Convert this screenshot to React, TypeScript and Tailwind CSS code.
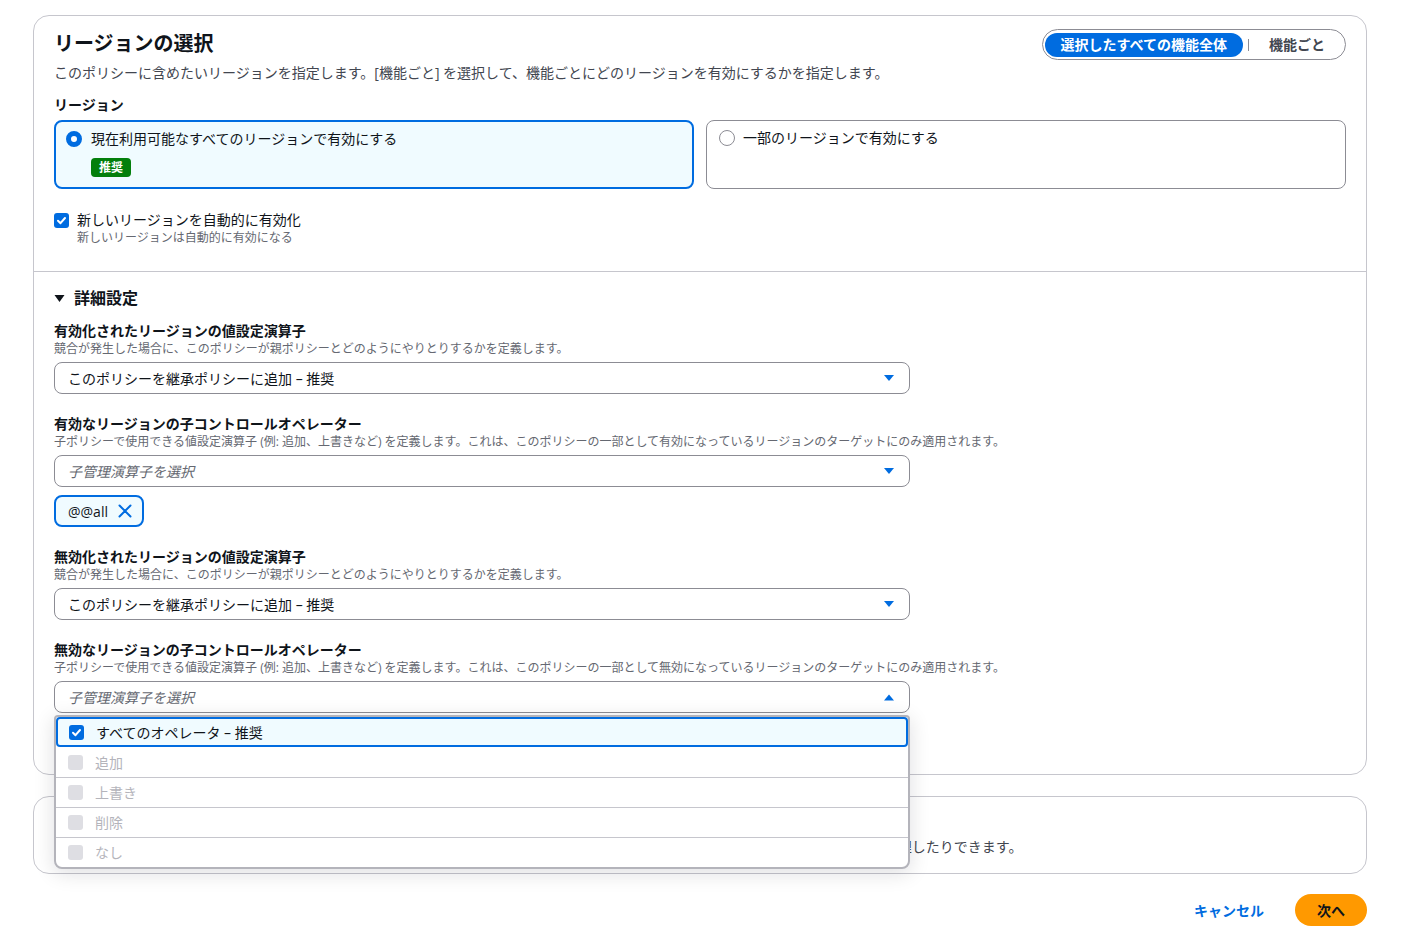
import React from "react";

const font = { fontFamily: '"Open Sans", "Noto Sans CJK JP", sans-serif' };

function Caret({ up = false }: { up?: boolean }) {
  return (
    <svg width="12" height="8" viewBox="0 0 12 8" className="shrink-0">
      {up ? <path d="M1 7.5 L6 1.5 L11 7.5 Z" fill="#006ce0" /> : <path d="M1 1 L6 7 L11 1 Z" fill="#006ce0" />}
    </svg>
  );
}

function CheckBox({ checked = false, disabled = false }: { checked?: boolean; disabled?: boolean }) {
  if (checked) {
    return (
      <span className="w-[15px] h-[15px] rounded-[3px] bg-[#006ce0] flex items-center justify-center shrink-0">
        <svg width="11" height="11" viewBox="0 0 11 11">
          <path d="M2 5.8 L4.5 8.2 L9 3" stroke="#fff" strokeWidth="2" fill="none" strokeLinecap="round" strokeLinejoin="round" />
        </svg>
      </span>
    );
  }
  return (
    <span
      className={
        disabled
          ? "w-[15px] h-[15px] rounded-[3px] bg-[#dedee3] shrink-0"
          : "w-[15px] h-[15px] rounded-[3px] border-2 border-[#8c8c94] shrink-0"
      }
    />
  );
}

function Select({ value, placeholder, up = false }: { value?: string; placeholder?: string; up?: boolean }) {
  return (
    <div className="mt-[5px] w-[856px] h-[32px] rounded-[8px] border border-[#8c8c94] bg-white flex items-center justify-between pl-[13px] pr-[14px]">
      {value ? (
        <span className="text-[14px] text-[#0f141a]">{value}</span>
      ) : (
        <span className="text-[14px] text-[#656871] italic">{placeholder}</span>
      )}
      <Caret up={up} />
    </div>
  );
}

function Field({ label, desc, children, first = false }: { label: string; desc: string; children: React.ReactNode; first?: boolean }) {
  return (
    <div className={first ? "mt-[12px]" : "mt-[20px]"}>
      <div className="text-[14px] leading-[20px] font-bold text-[#0f141a]">{label}</div>
      <div className="text-[12px] leading-[16px] text-[#656871]">{desc}</div>
      {children}
    </div>
  );
}

export default function App() {
  const childDesc = (kind: string) =>
    `子ポリシーで使用できる値設定演算子 (例: 追加、上書きなど) を定義します。これは、このポリシーの一部として${kind}になっているリージョンのターゲットにのみ適用されます。`;

  return (
    <div style={font} className="min-h-screen bg-white pl-[33px] pr-[55px] pt-[15px] pb-[18px] text-[#0f141a]">
      {/* Region selection container */}
      <div className="border border-[#c6c6cd] rounded-[16px] bg-white">
        <div className="px-[20px] pt-[13px] pb-[25px]">
          <div className="flex justify-between items-start">
            <div>
              <h2 className="mt-[3px] text-[20px] leading-[24px] font-bold">リージョンの選択</h2>
              <p className="mt-[7px] text-[14px] leading-[20px] text-[#424650]">
                このポリシーに含めたいリージョンを指定します。[機能ごと] を選択して、機能ごとにどのリージョンを有効にするかを指定します。
              </p>
            </div>
            <div className="h-[31px] rounded-full border border-[#8c8c94] flex items-center px-[2px]">
              <span className="h-[24px] rounded-full bg-[#006ce0] text-white text-[14px] font-bold flex items-center px-[16px]">
                選択したすべての機能全体
              </span>
              <span className="w-px h-[12px] bg-[#8c8c94] ml-[5px]" />
              <span className="text-[14px] font-bold text-[#424650] pl-[20px] pr-[18px]">機能ごと</span>
            </div>
          </div>

          <div className="mt-[12px] text-[14px] leading-[20px] font-bold">リージョン</div>
          <div className="mt-[5px] grid grid-cols-2 gap-[12px]">
            <div className="h-[69px] rounded-[8px] border-2 border-[#006ce0] bg-[#f0fbff] px-[10px] pt-[7px]">
              <div className="flex items-center gap-[9px]">
                <span className="w-[16px] h-[16px] rounded-full border-[5px] border-[#006ce0] bg-white shrink-0" />
                <span className="text-[14px] leading-[20px]">現在利用可能なすべてのリージョンで有効にする</span>
              </div>
              <span className="ml-[25px] mt-[9px] inline-flex h-[19px] items-center rounded-[4px] bg-[#037f0c] px-[8px] text-[12px] font-bold text-white">
                推奨
              </span>
            </div>
            <div className="h-[69px] rounded-[8px] border border-[#8c8c94] bg-white px-[12px] pt-[7px]">
              <div className="flex items-center gap-[8px]">
                <span className="w-[16px] h-[16px] rounded-full border border-[#8c8c94] bg-white shrink-0" />
                <span className="text-[14px] leading-[20px]">一部のリージョンで有効にする</span>
              </div>
            </div>
          </div>

          <div className="mt-[21px] flex items-start gap-[8px]">
            <div className="pt-[3px]">
              <CheckBox checked />
            </div>
            <div>
              <div className="text-[14px] leading-[20px]">新しいリージョンを自動的に有効化</div>
              <div className="text-[12px] leading-[16px] text-[#656871]">新しいリージョンは自動的に有効になる</div>
            </div>
          </div>
        </div>

        {/* Advanced settings */}
        <div className="border-t border-[#c6c6cd] px-[20px] pt-[15px] pb-[61px]">
          <div className="flex items-center gap-[9px]">
            <svg width="11" height="9" viewBox="0 0 11 9">
              <path d="M0.5 1 L10.5 1 L5.5 8 Z" fill="#0f141a" />
            </svg>
            <span className="text-[16px] leading-[22px] font-bold">詳細設定</span>
          </div>

          <Field first label="有効化されたリージョンの値設定演算子" desc="競合が発生した場合に、このポリシーが親ポリシーとどのようにやりとりするかを定義します。">
            <Select value="このポリシーを継承ポリシーに追加 – 推奨" />
          </Field>

          <Field label="有効なリージョンの子コントロールオペレーター" desc={childDesc("有効")}>
            <Select placeholder="子管理演算子を選択" />
            <div className="mt-[8px] inline-flex h-[32px] items-center gap-[10px] rounded-[8px] border-2 border-[#006ce0] bg-[#f0fbff] pl-[12px] pr-[10px]">
              <span className="text-[14px]">@@all</span>
              <svg width="14" height="14" viewBox="0 0 14 14">
                <path d="M1.5 1.5 L12.5 12.5 M12.5 1.5 L1.5 12.5" stroke="#006ce0" strokeWidth="2" strokeLinecap="round" />
              </svg>
            </div>
          </Field>

          <Field label="無効化されたリージョンの値設定演算子" desc="競合が発生した場合に、このポリシーが親ポリシーとどのようにやりとりするかを定義します。">
            <Select value="このポリシーを継承ポリシーに追加 – 推奨" />
          </Field>

          <Field label="無効なリージョンの子コントロールオペレーター" desc={childDesc("無効")}>
            <div className="relative">
              <Select placeholder="子管理演算子を選択" up />
              {/* open dropdown */}
              <div className="absolute left-0 top-[34px] w-[856px] z-10 rounded-b-[8px] rounded-t-[4px] border-2 border-[#b4b4bb] bg-white shadow-[0_4px_20px_1px_rgba(0,7,22,0.12)]">
                <div className="h-[30px] rounded-[4px] border-2 border-[#006ce0] bg-[#f0fbff] flex items-center gap-[12px] pl-[11px]">
                  <CheckBox checked />
                  <span className="text-[14px]">すべてのオペレータ – 推奨</span>
                </div>
                {["追加", "上書き", "削除", "なし"].map((t, i) => (
                  <div
                    key={t}
                    className={
                      i === 0
                        ? "h-[30px] flex items-center gap-[12px] pl-[12px]"
                        : "h-[30px] flex items-center gap-[12px] pl-[12px] border-t border-[#c6c6cd]"
                    }
                  >
                    <CheckBox disabled />
                    <span className="text-[14px] text-[#b4b4bb]">{t}</span>
                  </div>
                ))}
              </div>
            </div>
          </Field>
        </div>
      </div>

      {/* Tags container (partly covered by the open dropdown) */}
      <div className="mt-[21px] border border-[#c6c6cd] rounded-[16px] bg-white px-[20px] pt-[12px] pb-[16px]">
        <h2 className="text-[18px] leading-[24px] font-bold">タグ - オプション</h2>
        <p className="mt-[4px] text-[14px] leading-[20px] text-[#424650]">
          タグは AWS リソースに追加できるキーと値のペアです。タグを使用すると、リソースを識別、整理、検索したり、アクセスの許可を管理したりできます。
        </p>
      </div>

      {/* Footer actions */}
      <div className="mt-[20px] flex justify-end items-center gap-[31px]">
        <button className="text-[14px] font-bold text-[#006ce0]">キャンセル</button>
        <button className="h-[32px] w-[72px] rounded-full bg-[#ff9900] text-[14px] font-bold text-[#0f141a]">次へ</button>
      </div>
    </div>
  );
}
